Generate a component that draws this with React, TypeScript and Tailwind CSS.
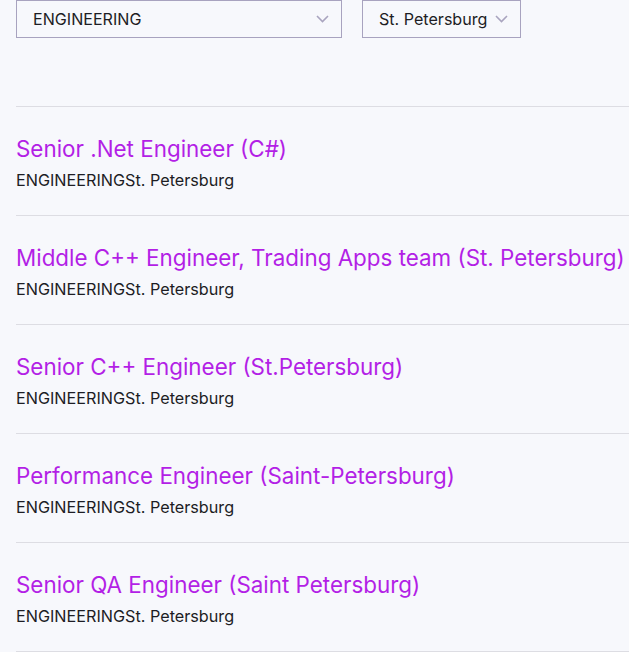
import * as React from "react";

const jobs = [
  "Senior .Net Engineer (C#)",
  "Middle C++ Engineer, Trading Apps team (St. Petersburg)",
  "Senior C++ Engineer (St.Petersburg)",
  "Performance Engineer (Saint-Petersburg)",
  "Senior QA Engineer (Saint Petersburg)",
];

function Chevron() {
  return (
    <svg width="13" height="8" viewBox="0 0 13 8" fill="none" className="shrink-0">
      <path d="M1 1L6.5 6.5L12 1" stroke="#a9a4bf" strokeWidth="1.6" />
    </svg>
  );
}

function Select({ label, className }: { label: string; className: string }) {
  return (
    <div
      className={`flex h-[38px] items-center justify-between border border-[#a8a3bf] bg-[#f7f8fc] pr-[12px] text-[16.1px] text-[#1d1d24] ${className}`}
    >
      <span>{label}</span>
      <Chevron />
    </div>
  );
}

export default function App() {
  return (
    <div className="min-h-[652px] overflow-hidden bg-[#f7f8fc] pl-4 font-['Inter',sans-serif]">
      <div className="flex gap-5">
        <Select label="ENGINEERING" className="w-[326px] pl-4" />
        <Select label="St. Petersburg" className="w-[159px] pl-4" />
      </div>
      <ul className="mt-[68px]">
        {jobs.map((title) => (
          <li key={title} className="border-t border-[#dddde3] pt-[28px] pb-[25px]">
            <a className="block whitespace-nowrap text-[22.4px] leading-[28px] text-[#b31fe6]">{title}</a>
            <div className="mt-[7px] text-[16.2px] leading-[20px] text-[#1d1d24]">
              <span>ENGINEERING</span>
              <span>St. Petersburg</span>
            </div>
          </li>
        ))}
        <li className="border-t border-[#dddde3]" />
      </ul>
    </div>
  );
}
